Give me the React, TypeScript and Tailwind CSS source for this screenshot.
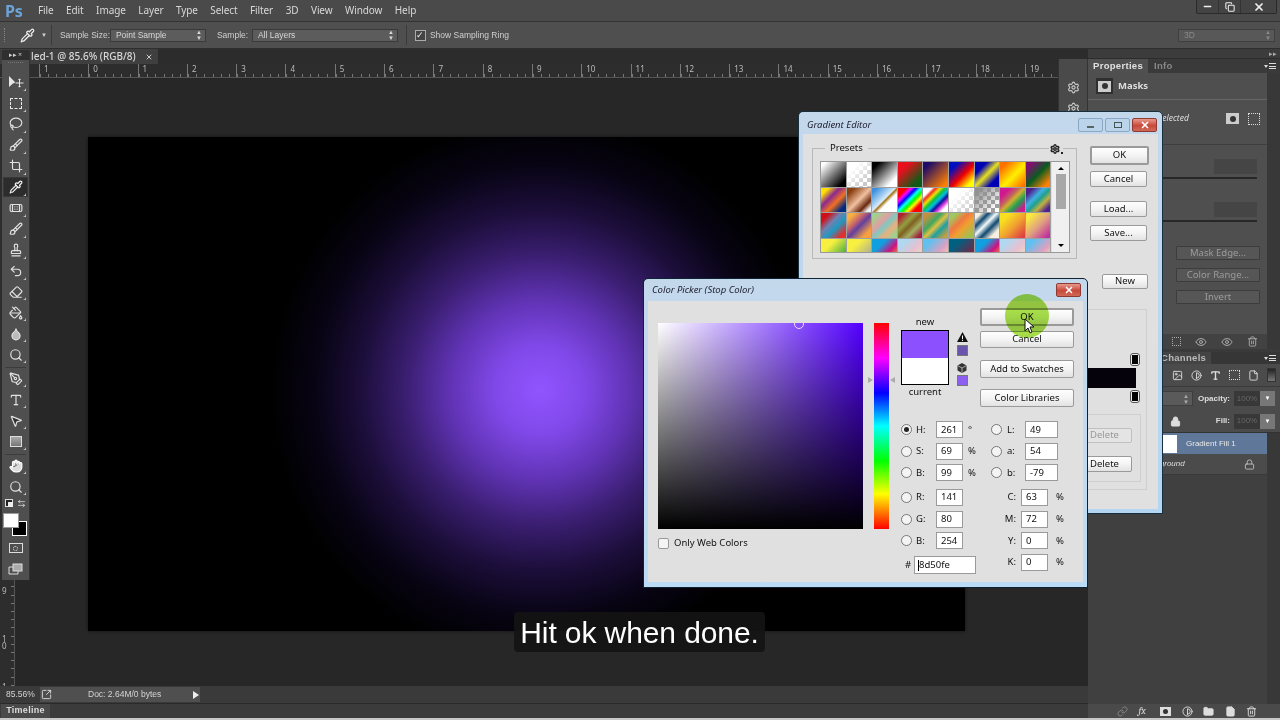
import { ReactNode } from "react";
import {
  ArrowLeftRight,
  Bandage,
  Brush,
  Contrast,
  Copy,
  Crop,
  Droplet,
  Eraser,
  Eye,
  File,
  Folder,
  Hand,
  Image,
  Lasso,
  Link,
  Lock,
  Minus,
  MousePointer2,
  PaintBucket,
  PenTool,
  Pipette,
  Search,
  Settings,
  SquareArrowOutUpRight,
  Stamp,
  Trash2,
  Type,
  Undo2,
  X,
} from "lucide-react";

const menus = ["File", "Edit", "Image", "Layer", "Type", "Select", "Filter", "3D", "View", "Window", "Help"];

const presets = [
  "bg-[linear-gradient(135deg,#fff_10%,#000_85%)]",
  "bg-[linear-gradient(135deg,#fff_25%,transparent_80%),conic-gradient(#c8c8c8_25%,#fff_0_50%,#c8c8c8_0_75%,#fff_0)] [background-size:100%_100%,8px_8px]",
  "bg-[linear-gradient(135deg,#000_15%,#fff_80%)]",
  "bg-[linear-gradient(135deg,#e8101c_25%,#0f5a16_80%)]",
  "bg-[linear-gradient(135deg,#1e0a68_15%,#ff8000_90%)]",
  "bg-[linear-gradient(135deg,#0010c0_20%,#f00000_55%,#ffff00_85%)]",
  "bg-[linear-gradient(135deg,#0000b4_25%,#e8e020_50%,#0000b4_78%)]",
  "bg-[linear-gradient(135deg,#ff7000_15%,#fff000_55%,#ff7000_95%)]",
  "bg-[linear-gradient(135deg,#801070_15%,#0a5a20_50%,#ff8000_88%)]",
  "bg-[linear-gradient(135deg,#ffe000_15%,#8a2a90_38%,#f07020_60%,#002a80_85%)]",
  "bg-[linear-gradient(135deg,#8a4010_15%,#f0c0a0_50%,#6a2a10_75%,#f0f0f0_90%)]",
  "bg-[linear-gradient(135deg,#3a90e0_10%,#d8ecf8_48%,#a07010_52%,#fff_62%)]",
  "bg-[linear-gradient(135deg,#f00_18%,#f0f_28%,#00f_38%,#0ff_48%,#0f0_58%,#ff0_68%,#f00_80%)]",
  "bg-[linear-gradient(135deg,#fff_18%,#f03020_26%,#f0e000_36%,#10c040_46%,#00c0e0_56%,#1010a0_66%,#e040e0_76%,#fff_86%)]",
  "bg-[linear-gradient(135deg,#fff_30%,transparent_90%),conic-gradient(#c8c8c8_25%,#fff_0_50%,#c8c8c8_0_75%,#fff_0)] [background-size:100%_100%,8px_8px]",
  "bg-[linear-gradient(135deg,#909090_10%,transparent_85%),conic-gradient(#a0a0a0_25%,#fff_0_50%,#a0a0a0_0_75%,#fff_0)] [background-size:100%_100%,8px_8px]",
  "bg-[linear-gradient(135deg,#d01890_20%,#c06060_38%,#d0b030_50%,#20a050_68%,#d01890_88%)]",
  "bg-[linear-gradient(135deg,#502090_15%,#40b0e0_38%,#20a090_52%,#c0b040_68%,#502090_88%)]",
  "bg-[linear-gradient(135deg,#d01018_18%,#7080b0_40%,#2098c0_60%,#e03030_85%)]",
  "bg-[linear-gradient(135deg,#f8b040_15%,#c06070_38%,#6040a0_52%,#f8a040_82%)]",
  "bg-[linear-gradient(135deg,#a0d090_12%,#e0a0a0_36%,#80c8c0_52%,#e8b080_70%,#a0d090_90%)]",
  "bg-[linear-gradient(135deg,#b02030_12%,#90a040_36%,#806020_50%,#a0b060_68%,#a02040_90%)]",
  "bg-[linear-gradient(135deg,#c09040_15%,#40a860_38%,#e0c040_52%,#20a0a0_68%,#c0a040_90%)]",
  "bg-[linear-gradient(135deg,#a0c860_15%,#f07840_40%,#f0a030_58%,#a0c050_88%)]",
  "bg-[linear-gradient(135deg,#f8f0e0_12%,#104870_28%,#f0f8f8_45%,#104870_62%,#f8f0e0_82%)]",
  "bg-[linear-gradient(135deg,#f8e020_20%,#f0a030_55%,#e04040_92%)]",
  "bg-[linear-gradient(135deg,#f8e840_15%,#e0a080_52%,#c030a0_92%)]",
  "bg-[linear-gradient(135deg,#f8f040_30%,#20a040_90%)]",
  "bg-[linear-gradient(135deg,#f8f040_30%,#a0a0a0_90%)]",
  "bg-[linear-gradient(135deg,#10a0e0_30%,#d01080_60%,#f8b020_90%)]",
  "bg-[linear-gradient(135deg,#b0d8f0_20%,#e8c0d0_55%,#f0e0c0_90%)]",
  "bg-[linear-gradient(135deg,#60c0f0_20%,#e0a0c0_60%,#f8e0b0_90%)]",
  "bg-[linear-gradient(135deg,#006080_25%,#802040_80%)]",
  "bg-[linear-gradient(135deg,#10a0e0_30%,#d01080_60%,#f8b020_90%)]",
  "bg-[linear-gradient(135deg,#b0d8f0_20%,#e8c0d0_55%,#f0e0c0_90%)]",
  "bg-[linear-gradient(135deg,#60c0f0_20%,#e0a0c0_60%,#f8e0b0_90%)]",
];

const rulerMarks = ["1", "0", "1", "2", "3", "4", "5", "6", "7", "8", "9", "10", "11", "12", "13", "14", "15", "16", "17", "18", "19", "20"];

const MoveIcon = () => (
  <svg width="16" height="14" viewBox="0 0 16 14" fill="none">
    <path d="M1 1v11l4-3.500 1.500-.5L7 7z" fill="#e6e6e6" />
    <path d="M11.500 4v8M7.500 8h8M10.500 5l1-1.200 1 1.200M10.500 11l1 1.200 1-1.200" stroke="#e6e6e6" />
  </svg>
);

const MarqueeIcon = () => <div className="w-[12px] h-[11px] border border-dashed border-[#ececec] rounded-[1px]" />;

const ShapeIcon = () => (
  <div className="w-[12px] h-[11px] border border-[#ddd] bg-[linear-gradient(#aaa,#777)]" />
);

const MaskIcon = () => (
  <div className="w-[14px] h-[10px] border border-[#ddd] flex items-center justify-center">
    <div className="w-[5px] h-[5px] rounded-full border border-dotted border-[#ddd]" />
  </div>
);

const ScreenIcon = () => (
  <svg width="15" height="12" viewBox="0 0 15 12" fill="none">
    <rect x="5" y="1" width="9" height="7" fill="#aaa" stroke="#ddd" />
    <path d="M5 4H1v7h9V8" stroke="#ddd" />
  </svg>
);

const Tool = ({ children, active }: { children: ReactNode; active?: boolean }) => (
  <div className="relative h-[21px] flex items-center justify-center">
    <div
      className={
        active
          ? "w-[25px] h-[20px] flex items-center justify-center bg-[#2c2c2c] border border-[#383838]"
          : "w-[25px] h-[20px] flex items-center justify-center"
      }
    >
      {children}
    </div>
    <div className="absolute right-[3px] bottom-[2px] w-0 h-0 border-l-[2px] border-t-[2px] border-l-transparent border-t-transparent border-r-[1px] border-b-[1px] border-r-[#ccc] border-b-[#ccc]" />
  </div>
);

const icon = { size: 14, color: "#e2e2e2", strokeWidth: 2 };

const ToolsPanel = () => (
  <div className="absolute left-[2px] top-[50px] w-[28px] h-[530px] bg-[#4f4f4f] border-r border-[#333] flex flex-col z-10">
    <div className="h-[10px] bg-[#2f2f2f] flex items-center justify-between px-[7px] text-[7px] leading-none text-[#ccc]">
      <span>▸▸</span>
      <span>×</span>
    </div>
    <div className="h-[10px] mx-[6px] mt-[2px] border-t border-dotted border-[#777]" />
    <Tool>
      <MoveIcon />
    </Tool>
    <Tool>
      <MarqueeIcon />
    </Tool>
    <Tool>
      <Lasso {...icon} />
    </Tool>
    <Tool>
      <Brush {...icon} />
    </Tool>
    <Tool>
      <Crop {...icon} />
    </Tool>
    <Tool active>
      <Pipette {...icon} color="#f2f2f2" />
    </Tool>
    <Tool>
      <Bandage {...icon} />
    </Tool>
    <Tool>
      <Brush {...icon} />
    </Tool>
    <Tool>
      <Stamp {...icon} />
    </Tool>
    <Tool>
      <Undo2 {...icon} />
    </Tool>
    <Tool>
      <Eraser {...icon} />
    </Tool>
    <Tool>
      <PaintBucket {...icon} />
    </Tool>
    <Tool>
      <Droplet {...icon} fill="#bbb" />
    </Tool>
    <Tool>
      <Search {...icon} />
    </Tool>
    <div className="h-[3px] mx-[3px] border-b border-[#3c3c3c]" />
    <Tool>
      <PenTool {...icon} />
    </Tool>
    <Tool>
      <Type {...icon} />
    </Tool>
    <Tool>
      <MousePointer2 {...icon} fill="#333" />
    </Tool>
    <Tool>
      <ShapeIcon />
    </Tool>
    <div className="h-[3px] mx-[3px] border-b border-[#3c3c3c]" />
    <Tool>
      <Hand {...icon} fill="#ddd" color="#fff" />
    </Tool>
    <Tool>
      <Search {...icon} />
    </Tool>
    <div className="h-[12px] flex items-center justify-between px-[3px]">
      <div className="relative w-[8px] h-[8px] border border-[#ddd] bg-[#222]">
        <div className="absolute left-[2px] top-[2px] w-[5px] h-[5px] bg-[#eee]" />
      </div>
      <ArrowLeftRight size={9} color="#e2e2e2" />
    </div>
    <div className="relative h-[27px] mt-[4px] ml-[1px]">
      <div className="absolute left-[9px] top-[8px] w-[15px] h-[15px] bg-black border border-white" />
      <div className="absolute left-0 top-0 w-[16px] h-[15px] bg-white border border-[#999]" />
    </div>
    <div className="h-[21px] -mt-[2px] flex items-center justify-center">
      <MaskIcon />
    </div>
    <div className="h-[21px] flex items-center justify-center">
      <ScreenIcon />
    </div>
  </div>
);

const Updown = () => (
  <span className="text-[6px] leading-[6px] flex flex-col">
    <span>▲</span>
    <span>▼</span>
  </span>
);

const DarkSelect = ({ label, width }: { label: string; width: string }) => (
  <div className={`${width} h-[13px] bg-[#5c5c5c] border border-[#3a3a3a] flex items-center justify-between pl-[5px] pr-[3px] text-[#d8d8d8]`}>
    <span>{label}</span>
    <Updown />
  </div>
);

const MenuBar = () => (
  <div className="h-[22px] shrink-0 bg-[#4a4a4a] border-b border-[#333] flex items-center text-[10px] tracking-[-0.1px] text-[#d8d8d8]">
    <span className="ml-[5px] w-[33px] font-bold text-[16px] text-[#6ca3d8]">Ps</span>
    <div className="flex gap-[12.500px]">
      {menus.map((m) => (
        <span key={m}>{m}</span>
      ))}
    </div>
    <div className="ml-auto mr-[3px] w-[81px] h-[14px] self-start flex bg-[#444] border-l border-b border-r border-[#2a2a2a] rounded-b-[2px]">
      <div className="w-[22px] flex items-center justify-center border-r border-[#333]">
        <Minus size={11} color="#eee" strokeWidth={3} />
      </div>
      <div className="w-[22px] flex items-center justify-center border-r border-[#333]">
        <Copy size={10} color="#eee" strokeWidth={2.5} />
      </div>
      <div className="flex-1 flex items-center justify-center">
        <X size={12} color="#eee" strokeWidth={3.5} />
      </div>
    </div>
  </div>
);

const OptionsBar = () => (
  <div className="h-[27px] shrink-0 bg-[#4f4f4f] border-b border-[#2e2e2e] flex items-center font-['Liberation_Sans',sans-serif] text-[8.500px] whitespace-nowrap text-[#d0d0d0]">
    <div className="ml-[4px] w-[2px] h-[14px] border-l border-dotted border-[#888]" />
    <div className="ml-[14px]">
      <Pipette size={15} color="#eee" />
    </div>
    <span className="ml-[6px] text-[6px]">▼</span>
    <div className="ml-[4px] w-px h-[20px] bg-[#3a3a3a]" />
    <span className="ml-[8px] w-[50px]">Sample Size:</span>
    <DarkSelect label="Point Sample" width="w-[96px]" />
    <span className="ml-[11px] w-[35px]">Sample:</span>
    <DarkSelect label="All Layers" width="w-[146px]" />
    <div className="ml-[8px] w-px h-[20px] bg-[#3a3a3a]" />
    <div className="ml-[8px] w-[11px] h-[11px] border border-[#aaa] bg-[#444] flex items-center justify-center text-[9px] leading-none text-[#eee]">
      ✓
    </div>
    <span className="ml-[4px]">Show Sampling Ring</span>
    <div className="ml-auto mr-[5px] w-[97px] h-[13px] bg-[#585858] border border-[#3f3f3f] flex items-center justify-between pl-[5px] pr-[3px] text-[#8a8a8a]">
      <span>3D</span>
      <Updown />
    </div>
  </div>
);

const DocArea = () => (
  <div className="flex-1 min-w-0 flex flex-col">
    <div className="h-[15px] shrink-0 bg-[#2c2c2c] flex">
      <div className="w-[158px] bg-[#3f3f3f] flex items-center justify-between pl-[31px] pr-[5px] text-[10px] font-medium text-[#d8d8d8]">
        <span>led-1 @ 85.6% (RGB/8)</span>
        <X size={8} color="#ccc" strokeWidth={3} />
      </div>
    </div>
    <div className="h-[14px] shrink-0 flex overflow-hidden bg-[#2d2d2d] border-b border-[#555] text-[8px] leading-[10px] text-[#bbb]">
      <div className="flex ml-[39px]">
        {rulerMarks.map((r, i) => (
          <div
            key={i}
            className="w-[49.300px] shrink-0 pl-[4px] border-l border-[#777] bg-[repeating-linear-gradient(90deg,#777_0,#777_1px,transparent_1px,transparent_8.200px)] bg-[length:100%_3px] bg-bottom bg-no-repeat"
          >
            {r}
          </div>
        ))}
      </div>
    </div>
    <div className="flex-1 min-h-0 flex bg-[#272727]">
      <div className="w-[15px] shrink-0 bg-[#2d2d2d] border-r border-[#555] bg-[repeating-linear-gradient(180deg,#777_0,#777_1px,transparent_1px,transparent_8.200px)] bg-[length:3px_100%] bg-right bg-no-repeat flex flex-col justify-end text-[8px] leading-[7px] text-[#bbb] pl-[2px]">
        <span className="mb-[41px]">9</span>
        <span className="mb-[34px] whitespace-pre">{"1\n0"}</span>
        <span className="-mb-[4px]">1</span>
      </div>
      <div className="flex-1 min-w-0 pl-[73px] pt-[59px]">
        <div className="w-[877px] h-[494px] bg-black bg-[radial-gradient(circle_at_452px_253px,#9155ff_0,#8048e8_45px,#6033b4_90px,#3a1e70_135px,#1c0e3a_180px,#080414_225px,#000_270px)] shadow-[0_0_3px_#111]" />
      </div>
    </div>
    <div className="h-[17px] shrink-0 bg-[#3a3a3a] flex items-center font-['Liberation_Sans',sans-serif] text-[8.500px] text-[#d4d4d4]">
      <span className="ml-[6px] w-[34px]">85.56%</span>
      <div className="w-[160px] h-[15px] bg-[#4f4f4f] flex items-center">
        <SquareArrowOutUpRight size={11} color="#ddd" className="ml-[1px]" />
        <span className="ml-[36px]">Doc: 2.64M/0 bytes</span>
        <div className="ml-auto mr-[1px] w-0 h-0 border-y-[4px] border-y-transparent border-l-[6px] border-l-[#eee]" />
      </div>
    </div>
    <div className="h-[15px] shrink-0 bg-[#3b3b3b] border-t border-[#2a2a2a] flex">
      <div className="w-[49px] ml-px bg-[#4a4a4a] flex items-center justify-center font-['Liberation_Sans',sans-serif] text-[9px] tracking-[0.3px] font-bold text-[#ddd]">
        Timeline
      </div>
    </div>
  </div>
);

const PanelBtn = ({ label }: { label: string }) => (
  <div className="w-[84px] h-[14px] mx-auto bg-[#565656] border border-[#3c3c3c] rounded-[1px] flex items-center justify-center text-[9.500px] text-[#9c9c9c]">
    {label}
  </div>
);

const Tab = ({ label, cls }: { label: string; cls: string }) => (
  <div className={`${cls} h-full px-[5px] flex items-center font-['Liberation_Sans',sans-serif] text-[9.500px] font-bold tracking-[0.3px]`}>
    {label}
  </div>
);

const MenuGlyph = () => (
  <div className="ml-auto mr-[4px] flex items-center gap-[1px]">
    <div className="w-0 h-0 border-x-[2px] border-x-transparent border-t-[3px] border-t-[#ddd]" />
    <div className="w-[7px] h-[6px] border-y border-[#ddd] bg-[linear-gradient(#ddd,#ddd)] bg-[length:100%_1px] bg-center bg-no-repeat" />
  </div>
);

const SliderRow = () => (
  <div className="mr-[10px] flex flex-col items-end">
    <div className="w-[43px] h-[15px] bg-[#454545]" />
    <div className="w-[95px] h-[2px] mt-[3px] bg-[#272727]" />
  </div>
);

const PropertiesPanel = () => (
  <div className="h-[290px] shrink-0 flex flex-col">
    <div className="h-[14px] shrink-0 flex bg-[#3a3a3a] items-center">
      <Tab label="Properties" cls="bg-[#505050] text-[#e0e0e0]" />
      <Tab label="Info" cls="ml-[1px] text-[#888]" />
      <MenuGlyph />
    </div>
    <div className="flex-1 min-h-0 flex">
      <div className="flex-1 min-w-0 bg-[#4f4f4f] flex flex-col">
        <div className="h-[27px] shrink-0 border-b border-[#666] flex items-center pl-[8px] text-[9.500px] font-bold text-[#ddd]">
          <div className="w-[17px] h-[16px] bg-[#2f2f2f] flex items-center justify-center">
            <div className="w-[13px] h-[11px] bg-[#ccc] flex items-center justify-center">
              <div className="w-[6px] h-[6px] rounded-full bg-[#333]" />
            </div>
          </div>
          <span className="ml-[5px]">Masks</span>
        </div>
        <div className="h-[45px] shrink-0 border-b border-[#3f3f3f] flex items-center pb-[7px] pl-[70px] text-[8.500px] italic text-[#ddd]">
          <span>Selected</span>
          <div className="ml-auto w-[13px] h-[11px] bg-[#ccc] flex items-center justify-center">
            <div className="w-[6px] h-[6px] rounded-full bg-[#333]" />
          </div>
          <div className="ml-[9px] mr-[7px] w-[12px] h-[12px] border border-dotted border-[#ddd]" />
        </div>
        <div className="mt-[14px]">
          <SliderRow />
        </div>
        <div className="mt-[23px]">
          <SliderRow />
        </div>
        <div className="ml-[84px] mr-[3px] mt-[24px] flex flex-col gap-[8px]">
          <PanelBtn label="Mask Edge..." />
          <PanelBtn label="Color Range..." />
          <PanelBtn label="Invert" />
        </div>
        <div className="mt-auto h-[15px] bg-[#424242] flex items-center pl-[84px] gap-[14px]">
          <div className="w-[9px] h-[9px] border border-dotted border-[#aaa]" />
          <Eye size={12} color="#aaa" />
          <Eye size={12} color="#aaa" />
          <Trash2 size={11} color="#aaa" />
        </div>
      </div>
      <div className="w-[13px] bg-[#383838]" />
    </div>
  </div>
);

const LayersPanel = () => (
  <div className="flex-1 min-h-0 mt-[3px] flex flex-col bg-[#404040]">
    <div className="h-[12px] shrink-0 bg-[#363636] flex items-center">
      <Tab label="Layers" cls="w-[68px] text-[#bbb]" />
      <Tab label="Channels" cls="bg-[#444] text-[#bbb]" />
      <MenuGlyph />
    </div>
    <div className="h-[23px] shrink-0 bg-[#4b4b4b] border-b border-[#3a3a3a] flex items-center gap-[8px] justify-end pr-[4px]">
      <Image size={11} color="#ddd" />
      <Contrast size={11} color="#ddd" />
      <Type size={11} color="#ddd" strokeWidth={3} />
      <div className="w-[11px] h-[10px] border border-dotted border-[#ddd]" />
      <File size={11} color="#ddd" />
      <div className="w-[9px] h-[14px] bg-[linear-gradient(#222,#777)] border border-[#333]" />
    </div>
    <div className="h-[23px] shrink-0 bg-[#4b4b4b] flex items-center pr-[5px] font-['Liberation_Sans',sans-serif] text-[8px] font-bold text-[#ddd]">
      <div className="w-[105px] h-[15px] bg-[#5a5a5a] border border-[#3f3f3f] flex items-center justify-end pr-[3px] text-[#aaa]">
        <Updown />
      </div>
      <span className="ml-auto">Opacity:</span>
      <div className="ml-[4px] w-[26px] h-[15px] bg-[#383838] text-[#666] font-normal flex items-center justify-center">100%</div>
      <div className="w-[15px] h-[15px] bg-[#777] flex items-center justify-center text-[6px] text-white">▼</div>
    </div>
    <div className="h-[23px] shrink-0 bg-[#4b4b4b] border-b border-[#333] flex items-center pr-[5px] font-['Liberation_Sans',sans-serif] text-[8px] font-bold text-[#ddd]">
      <Lock size={11} color="#ddd" className="ml-[82px]" fill="#ddd" />
      <span className="ml-auto">Fill:</span>
      <div className="ml-[4px] w-[26px] h-[15px] bg-[#383838] text-[#666] font-normal flex items-center justify-center">100%</div>
      <div className="w-[15px] h-[15px] bg-[#777] flex items-center justify-center text-[6px] text-white">▼</div>
    </div>
    <div className="flex-1 min-h-0 flex">
      <div className="flex-1 min-w-0 flex flex-col font-['Liberation_Sans',sans-serif] text-[8px]">
        <div className="h-[21px] shrink-0 bg-[#5f7899] flex items-center pl-[75px] text-[#e8e8e8]">
          <div className="w-[14px] h-[18px] bg-white" />
          <span className="ml-[9px]">Gradient Fill 1</span>
        </div>
        <div className="h-[21px] shrink-0 bg-[#4b4b4b] border-b border-[#3a3a3a] flex items-center pl-[54px] pr-[12px] italic text-[#ddd]">
          <span>Background</span>
          <Lock size={11} color="#bbb" className="ml-auto" />
        </div>
      </div>
      <div className="w-[13px] bg-[#383838]" />
    </div>
    <div className="h-[14px] shrink-0 bg-[#4a4a4a] flex items-center pl-[29px] gap-[10.500px] text-[10px] italic font-serif text-[#ddd]">
      <Link size={11} color="#888" />
      <span className="w-[11px]">fx</span>
      <div className="w-[11px] h-[9px] bg-[#ddd] flex items-center justify-center">
        <div className="w-[5px] h-[5px] rounded-full bg-[#333]" />
      </div>
      <Contrast size={11} color="#ddd" />
      <Folder size={11} color="#ddd" fill="#ddd" />
      <File size={11} color="#ddd" fill="#ddd" />
      <Trash2 size={11} color="#ddd" />
    </div>
  </div>
);

const RightColumn = () => (
  <div className="w-[192px] shrink-0 flex flex-col bg-[#3a3a3a]">
    <div className="h-[10px] shrink-0 bg-[#3c3c3c] border-b border-[#2c2c2c] flex items-center justify-end pr-[3px] text-[7px] leading-none text-[#aaa]">
      ▸▸
    </div>
    <PropertiesPanel />
    <LayersPanel />
  </div>
);

// icon strip floating between the document and the panels
const IconDock = () => (
  <div className="absolute left-[1058px] top-[59px] w-[30px] h-[60px] bg-[#4a4a4a] border-x border-[#333] flex flex-col items-center pt-[22px] gap-[8px]">
    <Settings size={13} color="#ccc" />
    <Settings size={13} color="#ccc" />
  </div>
);

const WinBtn = ({ label, cls, dim }: { label: string; cls: string; dim?: boolean }) => (
  <div
    className={`${cls} shrink-0 border rounded-[2px] flex items-center justify-center ${
      dim
        ? "bg-[#e4e4e4] border-[#c0c0c0] text-[#999]"
        : "bg-[linear-gradient(#fefefe,#f4f4f4_50%,#e2e2e2)] border-[#9a9a9a] text-[#111]"
    }`}
  >
    {label}
  </div>
);

const WinClose = ({ cls }: { cls: string }) => (
  <div className={`${cls} rounded-[2px] border border-[#8e3a32] bg-[linear-gradient(#e89a8c,#c9483a_55%,#d06a5a)] flex items-center justify-center`}>
    <X size={10} color="#fff" strokeWidth={4} />
  </div>
);

const GradientStop = ({ cls }: { cls: string }) => (
  <div className={`${cls} w-[10px] h-[13px] rounded-[3px] border border-[#555] bg-[#eee] p-[1px]`}>
    <div className="w-full h-full bg-black" />
  </div>
);

const GradientEditor = () => (
  <div className="absolute left-[798px] top-[111px] w-[365px] h-[403px] z-20 rounded-t-[5px] border border-[#16303f] bg-[linear-gradient(#c4d8ec,#b4d6f2)] px-[4px] pb-[4px] flex flex-col text-[9.500px] text-[#111]">
    <div className="h-[22px] shrink-0 flex items-center pl-[4px] pt-[4px]">
      <span className="italic text-[#223]">Gradient Editor</span>
      <div className="ml-auto flex gap-[2px] pr-[1px]">
        <div className="w-[25px] h-[14px] rounded-[2px] border border-[#8aa8c4] bg-[#bcd4ea] flex items-center justify-center">
          <div className="w-[7px] h-[2px] mt-[4px] bg-[#566]" />
        </div>
        <div className="w-[25px] h-[14px] rounded-[2px] border border-[#8aa8c4] bg-[#bcd4ea] flex items-center justify-center">
          <div className="w-[8px] h-[6px] border border-[#455]" />
        </div>
        <WinClose cls="w-[25px] h-[14px]" />
      </div>
    </div>
    <div className="flex-1 min-h-0 bg-[#e0e0e0] flex flex-col">
      <div className="flex pt-[14px] pl-[9px]">
        <div className="relative w-[265px] h-[111px] border border-[#b8b8b8]">
          <span className="absolute left-[12px] -top-[7px] px-[5px] bg-[#e0e0e0] leading-[12px]">Presets</span>
          <div className="absolute right-[13px] -top-[5px] pl-[1px] bg-[#e0e0e0] flex items-end gap-[1px]">
            <Settings size={10} color="#222" strokeWidth={3.5} />
            <div className="w-[2px] h-[2px] bg-[#222]" />
          </div>
          <div className="mt-[12px] ml-[7px] w-[250px] h-[92px] border border-[#999] flex overflow-hidden">
            <div className="w-[231px] shrink-0 grid grid-cols-[repeat(9,25.600px)] auto-rows-[25.600px] gap-0 overflow-hidden">
              {presets.map((c, i) => (
                <div key={i} className={`${c} border-r border-b border-[#a0a0a0]`} />
              ))}
            </div>
            <div className="flex-1 bg-[#f0f0f0] flex flex-col items-center pt-[5px]">
              <div className="w-0 h-0 border-x-[3px] border-x-transparent border-b-[3px] border-b-black" />
              <div className="mt-[4px] w-[10px] h-[35px] bg-[#a8a8a8]" />
              <div className="mt-auto mb-[5px] w-0 h-0 border-x-[3px] border-x-transparent border-t-[3px] border-t-black" />
            </div>
          </div>
        </div>
        <div className="ml-[13px] flex flex-col -mt-[2px]">
          <WinBtn label="OK" cls="w-[59px] h-[19px] border-2 border-[#7a7a7a]" />
          <WinBtn label="Cancel" cls="w-[57px] h-[16px] mt-[6px]" />
          <WinBtn label="Load..." cls="w-[57px] h-[16px] mt-[14px]" />
          <WinBtn label="Save..." cls="w-[57px] h-[16px] mt-[8px]" />
        </div>
      </div>
      <div className="relative flex-1 min-h-0 flex flex-col items-end">
        <WinBtn label="New" cls="w-[46px] h-[15px] mt-[15px] mr-[10px]" />
        <div className="w-[335px] h-[181px] mt-[20px] mr-[11px] border border-[#cfcfcf] flex flex-col items-end">
          <GradientStop cls="mt-[43px] mr-[6px]" />
          <div className="w-[310px] h-[20px] mt-[2px] mr-[10px] bg-[#05020c]" />
          <GradientStop cls="mt-[2px] mr-[6px]" />
          <div className="w-[328px] h-[68px] mt-[11px] mr-[5px] border border-[#cfcfcf] flex flex-col items-end">
            <WinBtn label="Delete" dim cls="w-[55px] h-[15px] mt-[13px] mr-[8px]" />
            <WinBtn label="Delete" cls="w-[55px] h-[16px] mt-[13px] mr-[8px]" />
          </div>
        </div>
      </div>
    </div>
  </div>
);

const Radio = ({ on }: { on?: boolean }) => (
  <div className="w-[11px] h-[11px] shrink-0 rounded-full border border-[#777] bg-[#f4f4f4] flex items-center justify-center">
    {on && <div className="w-[5px] h-[5px] rounded-full bg-[#222]" />}
  </div>
);

const Input = ({ value, cls }: { value: string; cls: string }) => (
  <div className={`${cls} h-[17px] shrink-0 bg-white border border-[#9a9a9a] flex items-center pl-[4px] text-[#111]`}>
    {value}
  </div>
);

const HsbRow = ({ label, value, unit, on }: { label: string; value: string; unit?: string; on?: boolean }) => (
  <div className="h-[21.600px] flex items-center">
    <Radio on={on} />
    <span className="w-[24px] pl-[4px] shrink-0">{label}</span>
    <Input value={value} cls="w-[27px]" />
    <span className="ml-[5px]">{unit}</span>
  </div>
);

const LabRow = ({ label, value }: { label: string; value: string }) => (
  <div className="h-[21.600px] flex items-center">
    <Radio />
    <span className="w-[23px] pl-[5px] shrink-0">{label}</span>
    <Input value={value} cls="w-[33px]" />
  </div>
);

const CmykRow = ({ label, value }: { label: string; value: string }) => (
  <div className="h-[21.600px] flex items-center">
    <span className="w-[30px] pr-[5px] shrink-0 text-right">{label}</span>
    <Input value={value} cls="w-[27px]" />
    <span className="ml-[8px]">%</span>
  </div>
);

const GamutIcon = () => (
  <svg width="11" height="10" viewBox="0 0 11 10">
    <path d="M5.500 0L11 10H0z" fill="#111" />
    <path d="M5 3.500h1V7H5zM5 7.800h1V9H5z" fill="#fff" />
  </svg>
);

const CubeIcon = () => (
  <svg width="10" height="10" viewBox="0 0 10 10">
    <path d="M5 0l4.500 2.500v5L5 10 .5 7.500v-5z" fill="#333" />
    <path d="M1 2.800L5 5l4-2.200M5 5v4.500" stroke="#ccc" strokeWidth="0.8" fill="none" />
  </svg>
);

const ColorPicker = () => (
  <div className="absolute left-[643px] top-[278px] w-[445px] h-[310px] z-30 rounded-t-[5px] border border-[#0d2233] bg-[linear-gradient(#c4d8ec,#bcdcf5)] px-[4px] pb-[5px] flex flex-col text-[9.500px] text-[#111]">
    <div className="h-[22px] shrink-0 flex items-center pl-[4px]">
      <span className="italic text-[#223]">Color Picker (Stop Color)</span>
      <WinClose cls="ml-auto mr-[2px] w-[25px] h-[14px]" />
    </div>
    <div className="flex-1 min-h-0 bg-[#e0e0e0] flex pl-[10px]">
      <div className="w-[205px] shrink-0 pt-[22px]">
        <div className="relative w-[205px] h-[206px] overflow-hidden bg-[linear-gradient(to_top,#000,transparent),linear-gradient(to_right,#fff,#5300ff)]">
          <div className="absolute left-[136px] -top-[4px] w-[10px] h-[10px] rounded-full border border-[#f0e0ff]" />
        </div>
        <div className="flex items-center mt-[7px]">
          <div className="w-[11px] h-[11px] rounded-[2px] border border-[#999] bg-[#f4f4f4]" />
          <span className="ml-[5px]">Only Web Colors</span>
        </div>
      </div>
      <div className="relative ml-[11px] mt-[22px] w-[15px] h-[206px] shrink-0 bg-[linear-gradient(#f00,#f0f_17%,#00f_34%,#0ff_50%,#0f0_67%,#ff0_83%,#f00)]">
        <div className="absolute -left-[6px] top-[54px] w-0 h-0 border-y-[3px] border-y-transparent border-l-[5px] border-l-[#aaa]" />
        <div className="absolute -right-[6px] top-[54px] w-0 h-0 border-y-[3px] border-y-transparent border-r-[5px] border-r-[#aaa]" />
      </div>
      <div className="ml-[12px] w-[170px] shrink-0 flex flex-col">
        <div className="flex pt-[7px]">
          <div className="w-[48px] shrink-0 flex flex-col items-center pt-[7px] leading-[14px]">
            <span>new</span>
            <div className="w-[48px] h-[55px] mt-[1px] border border-black flex flex-col">
              <div className="flex-1 bg-[#8d50fe]" />
              <div className="flex-1 bg-white" />
            </div>
            <span>current</span>
          </div>
          <div className="ml-[7px] w-[12px] shrink-0 flex flex-col items-center pt-[24px]">
            <GamutIcon />
            <div className="mt-[3px] w-[11px] h-[11px] border border-[#777] bg-[#6a55ac]" />
            <div className="mt-[7px]">
              <CubeIcon />
            </div>
            <div className="mt-[2px] w-[11px] h-[11px] border border-[#777] bg-[#8d5ff0]" />
          </div>
          <div className="ml-[12px] flex flex-col">
            <WinBtn label="OK" cls="w-[94px] h-[18px] border-2 border-[#6a6a6a]" />
            <WinBtn label="Cancel" cls="w-[94px] h-[17px] mt-[5px]" />
            <WinBtn label="Add to Swatches" cls="w-[94px] h-[18px] mt-[12px]" />
            <WinBtn label="Color Libraries" cls="w-[94px] h-[18px] mt-[11px]" />
          </div>
        </div>
        <div className="flex mt-[12px]">
          <div className="w-[90px] shrink-0 flex flex-col">
            <HsbRow label="H:" value="261" unit="°" on />
            <HsbRow label="S:" value="69" unit="%" />
            <HsbRow label="B:" value="99" unit="%" />
            <div className="h-[3px]" />
            <HsbRow label="R:" value="141" />
            <HsbRow label="G:" value="80" />
            <HsbRow label="B:" value="254" />
            <div className="flex items-center mt-[3px] h-[21.600px]">
              <span className="ml-[4px] w-[9px]">#</span>
              <div className="w-[62px] h-[18px] bg-white border border-[#9a9a9a] flex items-center pl-[3px]">
                <div className="w-px h-[11px] bg-black" />
                8d50fe
              </div>
            </div>
          </div>
          <div className="flex flex-col">
            <LabRow label="L:" value="49" />
            <LabRow label="a:" value="54" />
            <LabRow label="b:" value="-79" />
            <div className="h-[3px]" />
            <CmykRow label="C:" value="63" />
            <CmykRow label="M:" value="72" />
            <CmykRow label="Y:" value="0" />
            <CmykRow label="K:" value="0" />
          </div>
        </div>
      </div>
    </div>
  </div>
);

// click highlight and pointer, drawn over the OK button
const ClickMark = () => (
  <>
    <div className="absolute left-[1005px] top-[294px] w-[44px] h-[44px] z-40 rounded-full bg-[#a8e04a] mix-blend-multiply" />
    <svg className="absolute left-[1024px] top-[318px] z-40" width="12" height="16" viewBox="0 0 12 16">
      <path d="M1 1v12l3-3 2 5 2-1-2-5h4z" fill="#fff" stroke="#111" strokeWidth="1" />
    </svg>
  </>
);

export default function App() {
  return (
    <div className="relative w-[1280px] h-[720px] overflow-hidden flex flex-col bg-[#272727] font-['Noto_Sans','Open_Sans',sans-serif] blur-[0.3px]">
      <MenuBar />
      <OptionsBar />
      <div className="flex-1 min-h-0 flex">
        <DocArea />
        <RightColumn />
      </div>
      <div className="h-[2px] shrink-0 bg-[#c8c8c8]" />
      <ToolsPanel />
      <IconDock />
      <GradientEditor />
      <ColorPicker />
      <ClickMark />
      <div className="absolute left-[514px] top-[612px] w-[251px] h-[40px] z-40 rounded-[4px] bg-[rgba(20,20,20,0.9)] flex items-center justify-center font-['Liberation_Sans',sans-serif] text-[30px] tracking-[-0.1px] text-white">
        Hit ok when done.
      </div>
    </div>
  );
}
